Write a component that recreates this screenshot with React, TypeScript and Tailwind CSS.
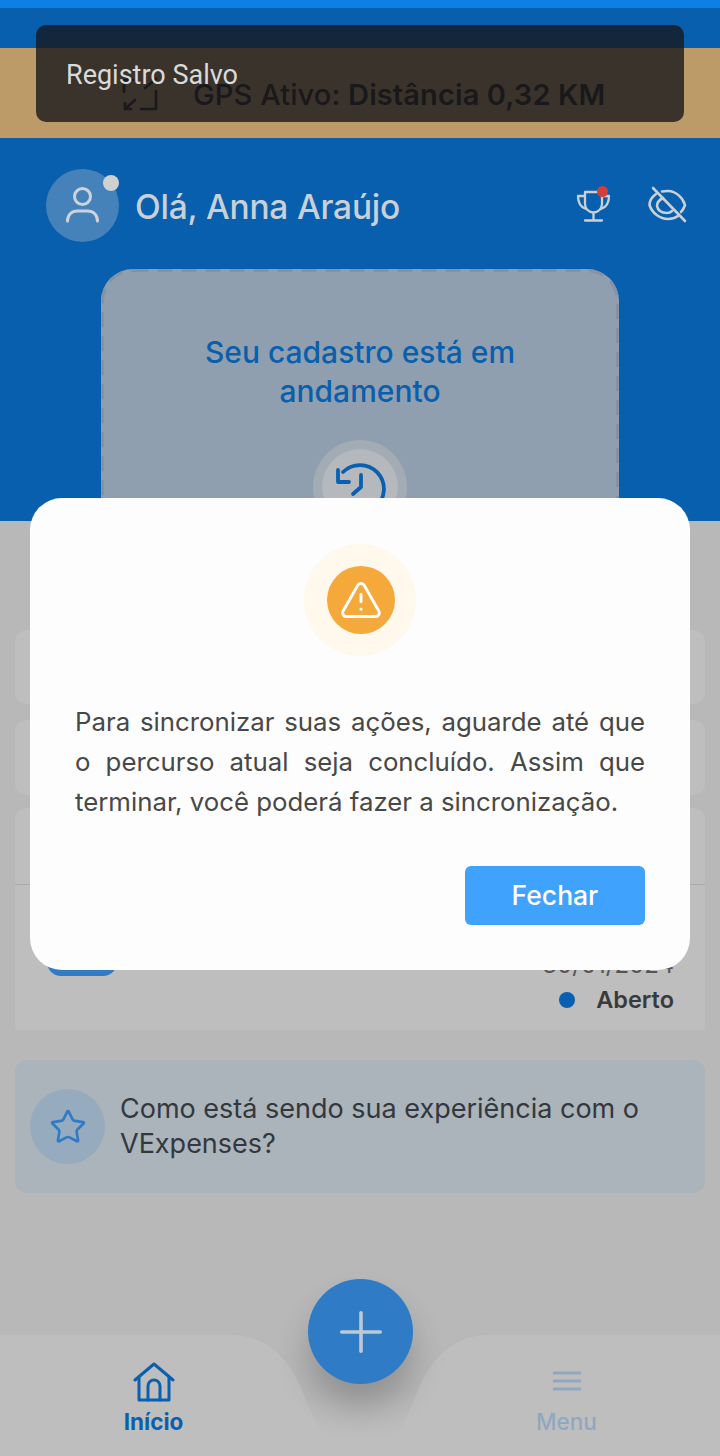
import { Plus, Star, TriangleAlert } from "lucide-react";

const sans = "font-['Inter',sans-serif]";

const HomeIcon = () => (
    <svg width="42" height="40" viewBox="0 0 42 40" fill="none" stroke="#0a5fae" strokeWidth="3" strokeLinejoin="round" strokeLinecap="round">
        <path d="M2 18 21 2l19 16" />
        <path d="M6 15v23h30V15" />
        <path d="M15 38V24a6 6 0 0 1 12 0v14" />
    </svg>
);

const GpsIcon = () => (
    <svg width="38" height="38" viewBox="0 0 38 38" fill="none" stroke="#221c17" strokeWidth="2.6" strokeLinecap="round" strokeLinejoin="round">
        <path d="M3 16V4h9" />
        <path d="M24 12 35 3" />
        <path d="M4 33l10-9M4 27v6h6" />
        <path d="M35 15v18H20" />
    </svg>
);

const UserIcon = () => (
    <svg width="42" height="42" viewBox="0 0 42 42" fill="none" stroke="#ccd3da" strokeWidth="3" strokeLinecap="round">
        <circle cx="20.5" cy="11.5" r="8" />
        <path d="M5.5 36c0-6 4-10 10-10h10c6 0 10 4 10 10" />
    </svg>
);

const TrophyIcon = () => (
    <svg width="36" height="36" viewBox="0 0 36 36" fill="none" stroke="#c8d0d8" strokeWidth="2.300" strokeLinecap="round" strokeLinejoin="round">
        <path d="M10 4h17v12a8.500 8.500 0 0 1-17 0Z" />
        <path d="M10 8H3c0 7 2 11 8 13M27 8h7c0 7-2 11-8 13" />
        <path d="M18.500 25v7.500M10 32.500h17" />
    </svg>
);

const EyeSlashIcon = () => (
    <svg width="40" height="40" viewBox="0 0 40 40" fill="none" stroke="#c8d0d8" strokeWidth="2.600" strokeLinecap="round" strokeLinejoin="round">
        <path d="M8 8C4 11 1.500 15 1.500 19 4 27 12 33 20 33c4 0 7-1 10-3" />
        <path d="M14 5.500c2-.5 4-.5 6-.5 8 0 15 7 17 14-1 3-2 5-4 7" />
        <path d="M15 12c-4 2-6 5-6 8 1 5 5 7 10 7 2 0 4-1 5-2" />
        <path d="M5 2l32 33" />
    </svg>
);

const ClockBackIcon = () => (
    <svg width="56" height="56" viewBox="0 0 56 56" fill="none" stroke="#0a60b0" strokeWidth="3.800" strokeLinecap="round" strokeLinejoin="round">
        <path d="M11 11A24 24 0 1 1 10 44" />
        <path d="M6 9v12h11" />
        <path d="M29 14v12l-8 7" />
    </svg>
);

const MenuIcon = () => (
    <svg width="28" height="20" viewBox="0 0 28 20" fill="none" stroke="#8fa8c0" strokeWidth="3">
        <path d="M0 2h28M0 10h28M0 18h28" />
    </svg>
);

export default function App() {
    return (
        <div className={`relative flex h-[1456px] w-[720px] flex-col overflow-hidden bg-[#b8b8b8] ${sans}`}>
            <div className="h-2 bg-[#0d7fe6]" />
            <div className="h-10 bg-[#085fae]" />

            {/* gps banner */}
            <div className="flex h-[90px] items-center gap-[34px] bg-[#bc9b69] pl-[121px] pt-[3px]">
                <GpsIcon />
                <p className="text-[29px] font-medium tracking-[0.1px] text-[#241d17]">
                    GPS Ativo: <span className="font-semibold">Distância 0,32 KM</span>
                </p>
            </div>

            {/* header */}
            <div className="h-[383px] overflow-hidden bg-[#085fae] px-[46px] pt-[31px]">
                <div className="flex items-center">
                    <div className="relative flex size-[73px] items-center justify-center rounded-full bg-[#4682ba]">
                        <UserIcon />
                        <span className="absolute right-0 top-[6px] size-4 rounded-full bg-[#d0d0d0]" />
                    </div>
                    <h1 className="ml-4 flex-1 pt-1 text-[33.500px] font-medium tracking-[-0.2px] text-[#c8d0d8]">Olá, Anna Araújo</h1>
                    <div className="relative mr-[37px]">
                        <TrophyIcon />
                        <span className="absolute right-[3px] top-[-2px] size-[11px] rounded-full bg-[#d2403a]" />
                    </div>
                    <div className="mr-[-14px]">
                        <EyeSlashIcon />
                    </div>
                </div>
                <div className="relative mx-[55px] mt-[27px] h-[320px] rounded-[32px] bg-[#8f9fb0] pt-[64px] text-center">
                    <svg className="absolute left-0 top-0" width="518" height="320" viewBox="0 0 518 320" fill="none">
                        <rect x="1.500" y="1.500" width="515" height="317" rx="31" stroke="#8492a4" strokeWidth="3" strokeDasharray="15 9" />
                    </svg>
                    <p className="text-[30px] font-medium leading-[39px] text-[#0a5fac]">
                        Seu cadastro está em
                        <br />
                        andamento
                    </p>
                    <div className="mx-auto mt-[29px] flex size-[94px] items-center justify-center rounded-full bg-[#a3abb5]">
                        <div className="flex size-[76px] items-center justify-center rounded-full bg-[#b5b8bc]">
                            <div className="mt-1">
                                <ClockBackIcon />
                            </div>
                        </div>
                    </div>
                </div>
            </div>

            {/* cards behind the dialog */}
            <div className="flex flex-1 flex-col px-[15px] pt-[109px]">
                <div className="h-[74px] rounded-xl bg-[#bebebe]" />
                <div className="mt-4 h-[75px] rounded-xl bg-[#bebebe]" />
                <div className="mt-[13px] h-[222px] rounded-t-xl bg-[#bebebe]">
                    <div className="h-[77px] border-b border-[#aaaaaa]" />
                    <div className="flex justify-between pl-8 pr-[31px] pt-[68px]">
                        <div className="mt-[-3px] h-[26px] w-[70px] rounded-b-[14px] bg-[#2f7bc6]" />
                        <div className="flex flex-col items-end">
                            <span className="text-[24px] leading-6 text-[#555555]">30/01/2024</span>
                            <div className="mt-[5px] flex items-center gap-[21px]">
                                <span className="size-4 rounded-full bg-[#0a60b0]" />
                                <span className="text-[23.500px] font-semibold text-[#3a3a3a]">Aberto</span>
                            </div>
                        </div>
                    </div>
                </div>
                <div className="mt-[30px] flex h-[133px] items-center gap-[15px] rounded-xl bg-[#abb3bb] pl-[15px] pr-5">
                    <div className="flex size-[75px] shrink-0 items-center justify-center rounded-full bg-[#97abbe]">
                        <Star size={38} strokeWidth={1.700} className="text-[#2f7bc6]" />
                    </div>
                    <p className="mt-[-2px] text-[27px] leading-[35px] text-[#33383d]">Como está sendo sua experiência com o VExpenses?</p>
                </div>
            </div>

            {/* bottom nav */}
            <nav className="relative flex h-[121px] bg-[#bebebe]">
                <svg className="absolute left-[230px] top-0" width="260" height="121" viewBox="0 0 260 121">
                    <defs>
                        <linearGradient id="notch" x1="0" y1="0" x2="0" y2="1">
                            <stop offset="0" stopColor="#b8b8b8" />
                            <stop offset="0.45" stopColor="#b6b6b6" />
                            <stop offset="0.85" stopColor="#bebebe" />
                        </linearGradient>
                    </defs>
                    <path d="M0 0H260C225 0 205 20 190 50C180 75 165 121 130 121C95 121 80 75 70 50C55 20 35 0 0 0Z" fill="url(#notch)" />
                </svg>
                <div className="relative flex w-[307px] flex-col items-center pt-[27px]">
                    <HomeIcon />
                    <span className="mt-[6px] text-[22.500px] font-bold leading-7 text-[#0a60b0]">Início</span>
                </div>
                <div className="relative ml-auto flex w-[307px] flex-col items-center pt-[36px]">
                    <MenuIcon />
                    <span className="mt-[17px] text-[22.500px] font-medium leading-7 text-[#8fa8c0]">Menu</span>
                </div>
            </nav>
            <button className="absolute left-[308px] top-[1279px] flex size-[105px] items-center justify-center rounded-full bg-[#2f7bc6] shadow-[0_22px_32px_rgba(0,0,0,0.2)]">
                <Plus size={66} strokeWidth={1.300} className="text-[#bccad8]" />
            </button>

            {/* toast */}
            <div className="absolute left-9 top-[25px] flex h-[97px] w-[648px] items-center rounded-[10px] bg-[rgba(23,23,28,0.79)] pl-[30px] pt-[3px]">
                <span className="font-['Roboto',sans-serif] text-[27px] text-[#dadada]">Registro Salvo</span>
            </div>

            {/* dialog */}
            <div className="absolute left-[30px] top-[498px] flex h-[472px] w-[660px] flex-col rounded-[32px] bg-[#fdfdfd] px-[45px] pt-[46px]">
                <div className="mx-auto flex size-[112px] items-center justify-center rounded-full bg-[#fff8ed]">
                    <div className="ml-px flex size-[68px] items-center justify-center rounded-full bg-[#f5a93b]">
                        <TriangleAlert size={44} strokeWidth={1.600} className="text-[#fdfdfd]" />
                    </div>
                </div>
                <p className="mt-[46px] text-justify text-[25.800px] leading-10 text-[#484848]">
                    Para sincronizar suas ações, aguarde até que o percurso atual seja concluído. Assim que terminar, você poderá fazer a sincronização.
                </p>
                <button className="ml-auto mt-[44px] h-[59px] w-[180px] rounded-md bg-[#3fa2fd] text-[26.500px] font-medium text-white">
                    Fechar
                </button>
            </div>
        </div>
    );
}
